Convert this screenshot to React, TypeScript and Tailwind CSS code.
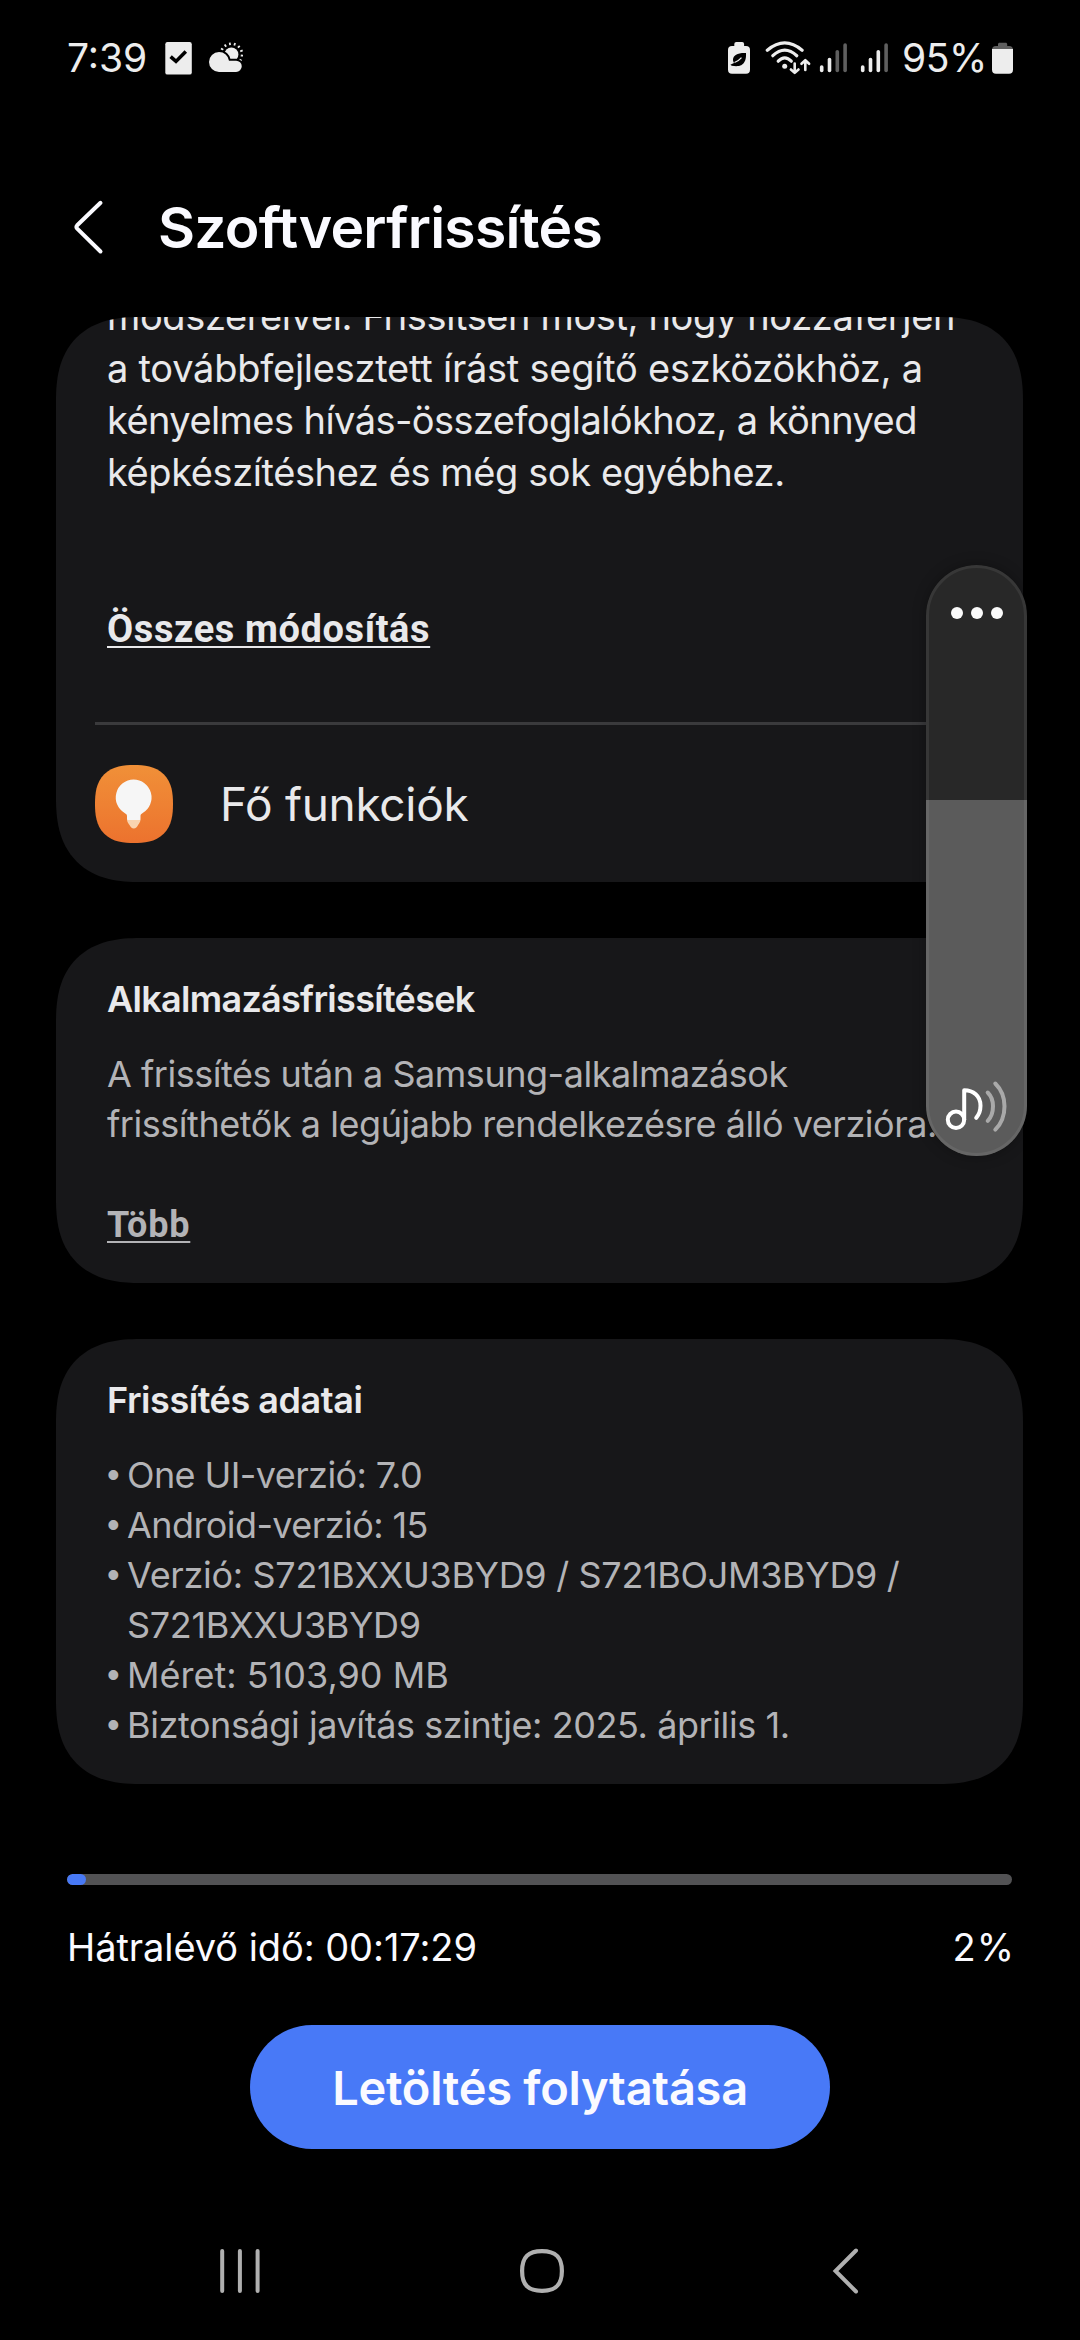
import type { ReactNode } from "react"
import { clsx } from "clsx"

const intro = [
  { text: "módszereivel. Frissítsen most, hogy hozzáférjen", className: "tracking-[-0.37px]" },
  { text: "a továbbfejlesztett írást segítő eszközökhöz, a", className: "tracking-[-0.24px]" },
  { text: "kényelmes hívás-összefoglalókhoz, a könnyed", className: "tracking-[-0.57px]" },
  { text: "képkészítéshez és még sok egyébhez.", className: "tracking-[-0.41px]" },
]

const details = [
  { lines: ["One UI-verzió: 7.0"], className: "tracking-[-0.59px]" },
  { lines: ["Android-verzió: 15"], className: "tracking-[-0.58px]" },
  {
    lines: ["Verzió: S721BXXU3BYD9 / S721BOJM3BYD9 /", "S721BXXU3BYD9"],
    className: "tracking-[-0.33px]",
  },
  { lines: ["Méret: 5103,90 MB"], className: "tracking-[0px]" },
  { lines: ["Biztonsági javítás szintje: 2025. április 1."], className: "tracking-[-0.42px]" },
]

// angle of each sun ray, in degrees
const rays = [-150, -124, -98, -72, -46, -20, 6, 32]

function SignalBars({ x, level }: { x: number; level: number }) {
  return (
    <g>
      {[25.3, 17.7, 10, 3.3].map((top, i) => (
        <rect
          key={top}
          x={x + i * 7.8}
          y={top}
          width="3.6"
          height={32.2 - top}
          rx="1.8"
          fill={i < level ? "#ededed" : "#5f5f5f"}
        />
      ))}
    </g>
  )
}

function StatusBar() {
  return (
    <div className="flex h-[78px] items-start justify-between pt-[38px] pr-[66px] pl-[67px] text-[39px] leading-[40px] text-[#ededed]">
      <div className="flex">
        <span className="w-[98px]">7:39</span>
        <svg width="78" height="38" viewBox="0 0 78 38" fill="#ededed" aria-hidden>
          <rect x="0.3" y="4" width="26.5" height="32.6" rx="2.2" />
          <path d="M5.6 18.6 11 23.4 20.8 13.6" fill="none" stroke="#000" strokeWidth="3.6" />
          {rays.map((deg) => (
            <rect
              key={deg}
              x="75.8"
              y="15.6"
              width="2.6"
              height="1.8"
              transform={`rotate(${deg} 66.4 16.5)`}
            />
          ))}
          <circle cx="66.4" cy="16.5" r="7" />
          <path
            d="M54 14a10 10 0 0 1 10 8.7h7.1a5.65 5.65 0 0 1 0 11.3H54a10 10 0 0 1 0-20Z"
            stroke="#000"
            strokeWidth="4"
            paintOrder="stroke"
          />
        </svg>
      </div>
      <div className="flex">
        <svg width="163" height="38" viewBox="0 -2 163 38" fill="#ededed" aria-hidden>
          <rect x="7.3" y="2" width="9.8" height="8" rx="2" />
          <rect x="1" y="6" width="22" height="27.7" rx="4" />
          <path
            d="M19 13C11 12.6 6.2 15 6 19.600c0 1.400.3 2.400 1 3.300l-3.600 1.900 1.400 1c4 .6 7.600.4 9.400-.5C18.200 23 19.300 18.600 19 13Z"
            fill="#000"
          />
          <path d="M7.5 22.5c3-1 5-2.400 7-4.800" stroke="#ededed" strokeWidth="1.3" fill="none" />
          <g fill="none" stroke="#ededed" strokeWidth="3.2" strokeLinecap="round" strokeLinejoin="round">
            <path d="M40.3 10.2Q57.7-4.4 75.1 10.2" />
            <path d="M45.8 15.7Q57.7 4.6 69.8 15.7" />
            <path d="M51.2 21.2Q57.7 14.4 64.3 21.2" />
            <path d="M67.7 23.5v9M63.9 29.5l3.8 3.4 3.8-3.4" strokeWidth="2.6" />
            <path d="M78.3 30v-9.500M74.5 23.8l3.8-3.6 3.8 3.6" strokeWidth="2.6" />
          </g>
          <circle cx="57.7" cy="26.3" r="2.5" />
          <SignalBars x={92.9} level={2} />
          <SignalBars x={133.9} level={3} />
        </svg>
        <span className="w-[101px] pl-3 tracking-[-0.45px]">95%</span>
        <svg width="23" height="38" viewBox="0 -2 23 38" aria-hidden>
          <path
            d="M7 5V4.2C7 3.3 7.700 2.700 8.500 2.700h6.200c.8 0 1.500.6 1.500 1.500V6h1.800a4 4 0 0 1 4 4H1a4 4 0 0 1 4-4h2Z"
            fill="#5f5f5f"
          />
          <path d="M1 9h21v20.700a4 4 0 0 1-4 4H5a4 4 0 0 1-4-4Z" fill="#ededed" />
        </svg>
      </div>
    </div>
  )
}

function Card({ className, children }: { className?: string; children: ReactNode }) {
  return (
    <section
      className={clsx(
        "mr-[57px] ml-14 overflow-hidden rounded-[84px] bg-[#171719] [corner-shape:superellipse(1.3)]",
        className
      )}
    >
      {children}
    </section>
  )
}

function BulbIcon() {
  return (
    <div className="size-[78px] rounded-[39px] bg-linear-to-b from-[#f09038] to-[#ec722e] [corner-shape:superellipse(1.35)]">
      <svg width="78" height="78" viewBox="0 0 78 78" aria-hidden>
        <path
          d="M32 54h13.500c0 3.500-1.700 4.500-2.700 6.500-.7 1.500-2 3-4 3s-3.300-1.500-4-3c-1-2-2.800-3-2.800-6.500Z"
          fill="#f9d3b0"
        />
        <path
          d="M38.500 14.500a18 18 0 0 1 9.200 33.500c-1.500 1-2.200 1.600-2.200 3v2.500c0 1-.6 1.600-1.600 1.600H33.600c-1 0-1.600-.6-1.600-1.600V51c0-1.400-.9-2-2.400-3a18 18 0 0 1 8.900-33.500Z"
          fill="#f6f6f6"
        />
      </svg>
    </div>
  )
}

function VolumePanel() {
  return (
    <div className="absolute top-[565px] left-[926px] flex h-[591px] w-[101px] flex-col overflow-hidden rounded-full bg-[#282828] shadow-[0_0_14px_rgba(0,0,0,0.3)]">
      <div className="flex h-[235px] justify-center gap-2 pt-[42px]">
        <span className="size-3 rounded-full bg-[#fafafa]" />
        <span className="size-3 rounded-full bg-[#fafafa]" />
        <span className="size-3 rounded-full bg-[#fafafa]" />
      </div>
      <div className="flex flex-1 items-end bg-[#5b5b5b] pb-[20px] pl-[18px]">
        <svg width="66" height="56" viewBox="0 0 66 56" fill="none" strokeWidth="4" strokeLinecap="round" aria-hidden>
          <g stroke="#fff" strokeLinejoin="round">
            <circle cx="12" cy="39.8" r="8.2" />
            <path d="M20.2 39.8V10.3c9 0 16.300 5.500 16.300 15.500 0 5-1.600 9-4.300 12" />
          </g>
          <g stroke="#a9a9a9">
            <path d="M43.7 12.5c3.500 3.500 5.300 8.500 5.300 13.700s-1.800 11-5.300 14.600" />
            <path d="M51.3 3.500c6 6 9.200 14 9.200 22.700s-3.200 17.500-9.200 23.500" />
          </g>
        </svg>
      </div>
      <div className="pointer-events-none absolute inset-0 rounded-full border-[3px] border-white/[0.07]" />
    </div>
  )
}

export default function App() {
  return (
    <main className="relative h-[2340px] w-[1080px] overflow-hidden bg-black font-['Inter',sans-serif] whitespace-nowrap text-[#e9e9eb]">
      <StatusBar />

      <header className="flex h-[239px] items-start gap-[54px] pt-[114px] pl-[73px]">
        <svg
          className="mt-[7px]"
          width="31"
          height="56"
          viewBox="0 0 31 56"
          fill="none"
          stroke="#fafaff"
          strokeWidth="4"
          strokeLinecap="round"
          strokeLinejoin="round"
          aria-hidden
        >
          <path d="M27.5 3.8 4.2 26.200q-1.500 1.700 0 3.400L27.500 52.500" />
        </svg>
        <h1 className="text-[57px] leading-[72px] font-semibold tracking-[-0.73px] text-[#fafaff]">
          Szoftverfrissítés
        </h1>
      </header>

      <Card className="h-[565px]">
        <div className="-mt-[27px] pl-[51px] text-[38px] leading-[52px]">
          {intro.map((line) => (
            <p key={line.text} className={line.className}>
              {line.text}
            </p>
          ))}
        </div>
        <a className="mt-[105px] ml-[51px] block w-fit font-['Roboto',sans-serif] text-[38px] leading-[52px] font-bold tracking-[0.6px] underline decoration-2 underline-offset-[4px]">
          Összes módosítás
        </a>
        <div className="mx-[39px] mt-[67px] h-[3px] bg-[#3a3a3c]" />
        <div className="mt-10 ml-[39px] flex gap-[47px]">
          <BulbIcon />
          <span className="text-[46px] leading-[78px] tracking-[-0.3px]">Fő funkciók</span>
        </div>
      </Card>

      <Card className="mt-14 h-[345px] pt-9 pl-[51px] text-[36px] leading-[50px]">
        <h2 className="font-semibold tracking-[-0.7px]">Alkalmazásfrissítések</h2>
        <div className="mt-[25px] text-[#b3b3b6]">
          <p className="tracking-[-0.48px]">A frissítés után a Samsung-alkalmazások</p>
          <p className="tracking-[-0.46px]">frissíthetők a legújabb rendelkezésre álló verzióra.</p>
          <a className="mt-[51px] block w-fit font-['Roboto',sans-serif] font-bold tracking-[0.8px] underline decoration-2 underline-offset-[4px]">
            Több
          </a>
        </div>
      </Card>

      <Card className="mt-14 h-[445px] pt-9 pl-[51px] text-[36px] leading-[50px]">
        <h2 className="font-semibold tracking-[-0.45px]">Frissítés adatai</h2>
        <ul className="mt-[25px] text-[#b3b3b6]">
          {details.map((item) => (
            <li key={item.lines[0]} className={clsx("flex", item.className)}>
              <span className="w-5 font-['Liberation_Sans',sans-serif]">•</span>
              <div>
                {item.lines.map((line) => (
                  <p key={line}>{line}</p>
                ))}
              </div>
            </li>
          ))}
        </ul>
      </Card>

      <div className="mt-[90px] mr-[68px] ml-[67px]">
        <div className="h-[11px] overflow-hidden rounded-full bg-[#525254]">
          <div className="h-full rounded-full bg-[#4879f5]" style={{ width: "2%" }} />
        </div>
        <div className="mt-[37px] flex justify-between text-[38px] leading-[50px] text-[#fafaff]">
          <span className="tracking-[-0.07px]">Hátralévő idő: 00:17:29</span>
          <span className="-mr-[3px] tracking-[1px]">2%</span>
        </div>
      </div>

      <button
        type="button"
        className="mx-auto mt-[53px] flex h-[124px] w-[580px] items-center justify-center rounded-full bg-[#4879f7] pt-0.5 text-[47px] font-semibold tracking-[-0.28px] text-[#fafaff]"
      >
        Letöltés folytatása
      </button>

      <nav className="mt-[98px] flex pl-[220px]">
        <svg width="40" height="48" viewBox="0 0 40 48" stroke="#b0b0b0" strokeWidth="4" strokeLinecap="round" aria-hidden>
          <path d="M2.2 4v40M19.9 4v40M37.6 4v40" />
        </svg>
        <svg
          className="ml-[260px]"
          width="44"
          height="48"
          viewBox="0 0 44 48"
          fill="none"
          stroke="#b0b0b0"
          strokeWidth="4.2"
          aria-hidden
        >
          <path d="M22 4.100c13.500 0 19.900 5.500 19.900 19.900S35.500 43.900 22 43.900 2.100 38.400 2.100 24 8.500 4.100 22 4.100Z" />
        </svg>
        <svg
          className="ml-[268px]"
          width="28"
          height="48"
          viewBox="0 0 28 48"
          fill="none"
          stroke="#b0b0b0"
          strokeWidth="4"
          strokeLinecap="round"
          aria-hidden
        >
          <path d="M24 3.500 3.500 24 24 44.500" />
        </svg>
      </nav>

      <VolumePanel />
    </main>
  )
}
